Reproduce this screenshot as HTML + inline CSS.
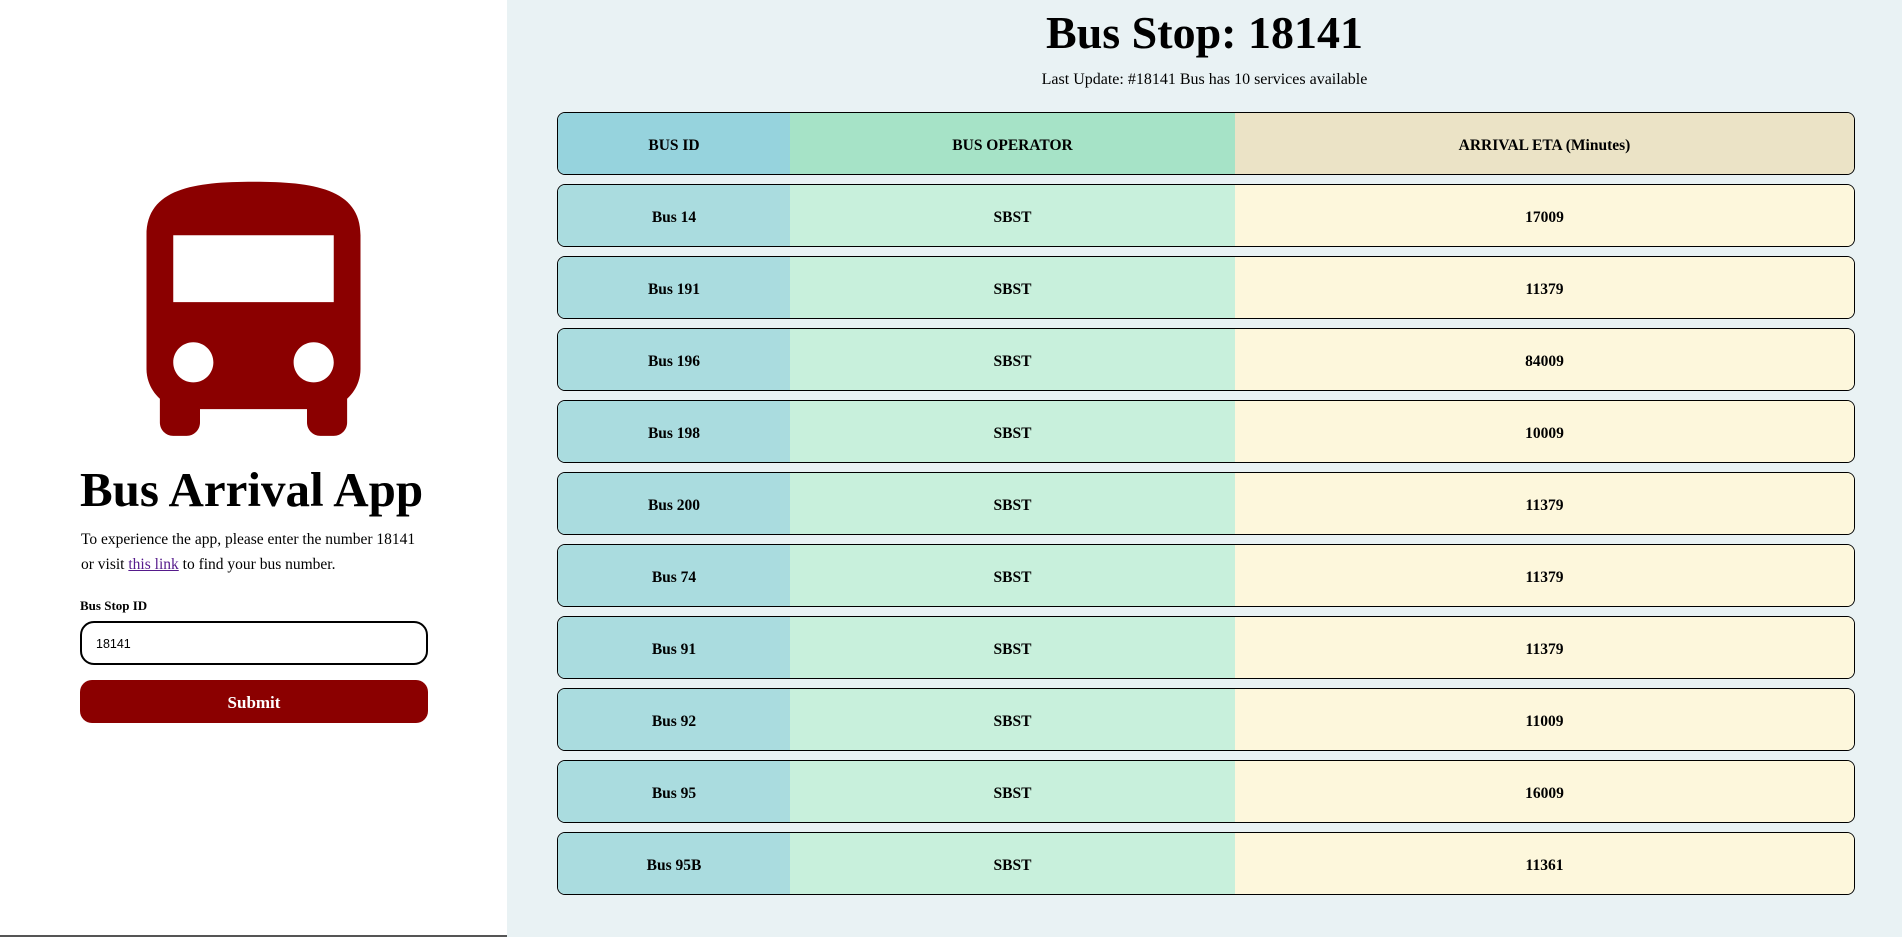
<!DOCTYPE html>
<html><head><meta charset="utf-8"><style>
*{box-sizing:border-box;margin:0;padding:0}
html,body{width:1902px;height:937px;overflow:hidden;font-family:"Liberation Serif",serif;background:#e9f2f4}
.left{position:absolute;left:0;top:0;width:507px;height:937px;background:#fff;border-bottom:2px solid #555}
svg.bus{position:absolute;left:93px;top:155px}
h1.app{position:absolute;left:80px;top:461px;font-size:49px;font-weight:bold;white-space:nowrap}
p.desc{position:absolute;left:81px;top:527px;width:345px;font-size:15.5px;line-height:25px}
p.desc a{color:#551a8b;text-decoration:underline}
.lbl{position:absolute;left:80px;top:598px;font-size:13px;font-weight:bold}
.inp{position:absolute;left:80px;top:621px;width:348px;height:44px;border:2px solid #000;border-radius:14px;font-family:"Liberation Sans",sans-serif;font-size:12.5px;padding-left:14px;line-height:42px}
.btn{position:absolute;left:80px;top:680px;width:348px;height:43px;background:#8b0000;border-radius:12px;color:#fff;font-weight:bold;font-size:17px;text-align:center;line-height:45px}
h2{position:absolute;left:507px;width:1395px;top:6px;text-align:center;font-size:46px;font-weight:bold}
.sub{position:absolute;left:507px;width:1395px;top:71px;text-align:center;font-size:16px}
.row{position:absolute;left:557px;width:1298px;height:63px;border:1px solid #000;border-radius:8px;overflow:hidden;display:flex;font-weight:bold;font-size:15.5px}
.row div{display:flex;align-items:center;justify-content:center;padding-top:4px}
.c1{width:232px;background:#aadcdf}.c2{width:445px;background:#c8f0dc}.c3{flex:1;background:#fdf7dc}
.hd .c1{background:#96d3dd}.hd .c2{background:#a6e3c7}.hd .c3{background:#ebe3c6}
</style></head><body>
<div class="left">
<svg class="bus" width="321" height="321" viewBox="0 0 24 24"><path fill="#8b0000" d="M4 16c0 .88.39 1.67 1 2.220V20c0 .55.45 1 1 1h1c.55 0 1-.45 1-1v-1h8v1c0 .55.45 1 1 1h1c.55 0 1-.45 1-1v-1.78c.61-.55 1-1.34 1-2.22V6c0-3.5-3.580-4-8-4s-8 .5-8 4v10zm3.5 1c-.83 0-1.5-.67-1.5-1.5S6.67 14 7.5 14s1.5.67 1.5 1.5S8.33 17 7.5 17zm9 0c-.83 0-1.5-.67-1.5-1.5s.67-1.5 1.5-1.5 1.5.67 1.5 1.5-.67 1.5-1.5 1.5zm1.5-6H6V6h12v5z"/></svg>
<h1 class="app">Bus Arrival App</h1>
<p class="desc">To experience the app, please enter the number 18141 or visit <a>this link</a> to find your bus number.</p>
<div class="lbl">Bus Stop ID</div>
<div class="inp">18141</div>
<div class="btn">Submit</div>
</div>
<h2>Bus Stop: 18141</h2>
<div class="sub">Last Update: #18141 Bus has 10 services available</div>
<div class="row hd" style="top:112px"><div class="c1">BUS ID</div><div class="c2">BUS OPERATOR</div><div class="c3">ARRIVAL ETA (Minutes)</div></div>
<div class="row" style="top:184px"><div class="c1">Bus 14</div><div class="c2">SBST</div><div class="c3">17009</div></div>
<div class="row" style="top:256px"><div class="c1">Bus 191</div><div class="c2">SBST</div><div class="c3">11379</div></div>
<div class="row" style="top:328px"><div class="c1">Bus 196</div><div class="c2">SBST</div><div class="c3">84009</div></div>
<div class="row" style="top:400px"><div class="c1">Bus 198</div><div class="c2">SBST</div><div class="c3">10009</div></div>
<div class="row" style="top:472px"><div class="c1">Bus 200</div><div class="c2">SBST</div><div class="c3">11379</div></div>
<div class="row" style="top:544px"><div class="c1">Bus 74</div><div class="c2">SBST</div><div class="c3">11379</div></div>
<div class="row" style="top:616px"><div class="c1">Bus 91</div><div class="c2">SBST</div><div class="c3">11379</div></div>
<div class="row" style="top:688px"><div class="c1">Bus 92</div><div class="c2">SBST</div><div class="c3">11009</div></div>
<div class="row" style="top:760px"><div class="c1">Bus 95</div><div class="c2">SBST</div><div class="c3">16009</div></div>
<div class="row" style="top:832px"><div class="c1">Bus 95B</div><div class="c2">SBST</div><div class="c3">11361</div></div>
</body></html>
